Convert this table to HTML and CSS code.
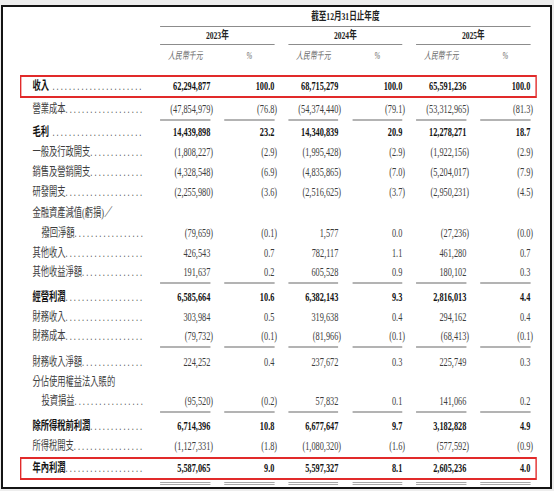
FILE: index.html
```html
<!DOCTYPE html>
<html lang="zh-Hant">
<head>
<meta charset="utf-8">
<title>綜合損益表</title>
<link rel="stylesheet" href="styles.css">
</head>
<body>
<div class="frame">
  <div class="sheet">
    <div class="row title-row">
      <div class="lab"></div>
      <div class="title">截至12月31日止年度</div>
    </div>
    <div class="row year-row">
      <div class="lab"></div>
      <div class="year">2023年</div>
      <div class="year">2024年</div>
      <div class="year">2025年</div>
    </div>
    <div class="row unit-row">
      <div class="lab"></div>
      <div class="unit">人民幣千元</div><div class="unit">%</div>
      <div class="unit">人民幣千元</div><div class="unit">%</div>
      <div class="unit">人民幣千元</div><div class="unit">%</div>
    </div>

    <div class="row boxed bold mt8">
      <div class="lab"><span class="t">收入</span><span class="dots sp">......................</span></div>
      <div class="v">62,294,877</div><div class="v">100.0</div>
      <div class="v">68,715,279</div><div class="v">100.0</div>
      <div class="v">65,591,236</div><div class="v">100.0</div>
    </div>
    <div class="row ulrow mt2">
      <div class="lab"><span class="t">營業成本</span><span class="dots">...................</span></div>
      <div class="v ul"><span class="n">(47,854,979)</span></div><div class="v ul"><span class="n">(76.8)</span></div>
      <div class="v ul"><span class="n">(54,374,440)</span></div><div class="v ul"><span class="n">(79.1)</span></div>
      <div class="v ul"><span class="n">(53,312,965)</span></div><div class="v ul"><span class="n">(81.3)</span></div>
    </div>
    <div class="row bold mt1">
      <div class="lab"><span class="t">毛利</span><span class="dots sp">......................</span></div>
      <div class="v">14,439,898</div><div class="v">23.2</div>
      <div class="v">14,340,839</div><div class="v">20.9</div>
      <div class="v">12,278,271</div><div class="v">18.7</div>
    </div>
    <div class="row">
      <div class="lab"><span class="t">一般及行政開支</span><span class="dots">.............</span></div>
      <div class="v"><span class="n">(1,808,227)</span></div><div class="v"><span class="n">(2.9)</span></div>
      <div class="v"><span class="n">(1,995,428)</span></div><div class="v"><span class="n">(2.9)</span></div>
      <div class="v"><span class="n">(1,922,156)</span></div><div class="v"><span class="n">(2.9)</span></div>
    </div>
    <div class="row">
      <div class="lab"><span class="t">銷售及營銷開支</span><span class="dots">.............</span></div>
      <div class="v"><span class="n">(4,328,548)</span></div><div class="v"><span class="n">(6.9)</span></div>
      <div class="v"><span class="n">(4,835,865)</span></div><div class="v"><span class="n">(7.0)</span></div>
      <div class="v"><span class="n">(5,204,017)</span></div><div class="v"><span class="n">(7.9)</span></div>
    </div>
    <div class="row">
      <div class="lab"><span class="t">研發開支</span><span class="dots">...................</span></div>
      <div class="v"><span class="n">(2,255,980)</span></div><div class="v"><span class="n">(3.6)</span></div>
      <div class="v"><span class="n">(2,516,625)</span></div><div class="v"><span class="n">(3.7)</span></div>
      <div class="v"><span class="n">(2,950,231)</span></div><div class="v"><span class="n">(4.5)</span></div>
    </div>
    <div class="row mt1">
      <div class="lab"><span class="t">金融資產減值(虧損)／</span></div>
    </div>
    <div class="row">
      <div class="lab indent"><span class="t">撥回淨額</span><span class="dots">.................</span></div>
      <div class="v"><span class="n">(79,659)</span></div><div class="v"><span class="n">(0.1)</span></div>
      <div class="v">1,577</div><div class="v">0.0</div>
      <div class="v"><span class="n">(27,236)</span></div><div class="v"><span class="n">(0.0)</span></div>
    </div>
    <div class="row">
      <div class="lab"><span class="t">其他收入</span><span class="dots">...................</span></div>
      <div class="v">426,543</div><div class="v">0.7</div>
      <div class="v">782,117</div><div class="v">1.1</div>
      <div class="v">461,280</div><div class="v">0.7</div>
    </div>
    <div class="row ulrow">
      <div class="lab"><span class="t">其他收益淨額</span><span class="dots">...............</span></div>
      <div class="v ul">191,637</div><div class="v ul">0.2</div>
      <div class="v ul">605,528</div><div class="v ul">0.9</div>
      <div class="v ul">180,102</div><div class="v ul">0.3</div>
    </div>
    <div class="row bold mt3">
      <div class="lab"><span class="t">經營利潤</span><span class="dots">...................</span></div>
      <div class="v">6,585,664</div><div class="v">10.6</div>
      <div class="v">6,382,143</div><div class="v">9.3</div>
      <div class="v">2,816,013</div><div class="v">4.4</div>
    </div>
    <div class="row">
      <div class="lab"><span class="t">財務收入</span><span class="dots">...................</span></div>
      <div class="v">303,984</div><div class="v">0.5</div>
      <div class="v">319,638</div><div class="v">0.4</div>
      <div class="v">294,162</div><div class="v">0.4</div>
    </div>
    <div class="row ulrow">
      <div class="lab"><span class="t">財務成本</span><span class="dots">...................</span></div>
      <div class="v ul"><span class="n">(79,732)</span></div><div class="v ul"><span class="n">(0.1)</span></div>
      <div class="v ul"><span class="n">(81,966)</span></div><div class="v ul"><span class="n">(0.1)</span></div>
      <div class="v ul"><span class="n">(68,413)</span></div><div class="v ul"><span class="n">(0.1)</span></div>
    </div>
    <div class="row mt4">
      <div class="lab"><span class="t">財務收入淨額</span><span class="dots">...............</span></div>
      <div class="v">224,252</div><div class="v">0.4</div>
      <div class="v">237,672</div><div class="v">0.3</div>
      <div class="v">225,749</div><div class="v">0.3</div>
    </div>
    <div class="row">
      <div class="lab"><span class="t">分佔使用權益法入賬的</span></div>
    </div>
    <div class="row ulrow">
      <div class="lab indent"><span class="t">投資損益</span><span class="dots">.................</span></div>
      <div class="v ul"><span class="n">(95,520)</span></div><div class="v ul"><span class="n">(0.2)</span></div>
      <div class="v ul">57,832</div><div class="v ul">0.1</div>
      <div class="v ul">141,066</div><div class="v ul">0.2</div>
    </div>
    <div class="row bold mt3">
      <div class="lab"><span class="t">除所得稅前利潤</span><span class="dots">.............</span></div>
      <div class="v">6,714,396</div><div class="v">10.8</div>
      <div class="v">6,677,647</div><div class="v">9.7</div>
      <div class="v">3,182,828</div><div class="v">4.9</div>
    </div>
    <div class="row">
      <div class="lab"><span class="t">所得稅開支</span><span class="dots">.................</span></div>
      <div class="v"><span class="n">(1,127,331)</span></div><div class="v"><span class="n">(1.8)</span></div>
      <div class="v"><span class="n">(1,080,320)</span></div><div class="v"><span class="n">(1.6)</span></div>
      <div class="v"><span class="n">(577,592)</span></div><div class="v"><span class="n">(0.9)</span></div>
    </div>
    <div class="row boxed bold mt1">
      <div class="lab"><span class="t">年內利潤</span><span class="dots">...................</span></div>
      <div class="v">5,587,065</div><div class="v">9.0</div>
      <div class="v">5,597,327</div><div class="v">8.1</div>
      <div class="v">2,605,236</div><div class="v">4.0</div>
    </div>
    <div class="row rule-row mt2">
      <div class="lab"></div>
      <div class="dbl"></div><div class="dbl"></div><div class="dbl"></div>
      <div class="dbl"></div><div class="dbl"></div><div class="dbl"></div>
    </div>
  </div>
</div>
</body>
</html>
```

FILE: styles.css
```css
html, body {
  margin: 0;
  padding: 0;
  background: #ededed;
}

body {
  width: 554px;
  height: 491px;
  overflow: hidden;
  font-family: "Liberation Serif", "Noto Sans CJK TC", serif;
  font-size: 12px;
  color: #3d3d3d;
}

.frame {
  box-sizing: border-box;
  margin: 5px 0 0 1px;
  width: 551px;
  height: 484px;
  border: 2px solid #141414;
  background: #ffffff;
  padding-left: 17px;
}

/* Table is laid out in a wider space and compressed horizontally,
   matching the narrow typeface of the source document. */
.sheet {
  width: 749.3px;
  transform: scaleX(0.69);
  transform-origin: 0 0;
}

.row {
  display: grid;
  grid-template-columns: 181.16px repeat(6, 72.46px);
  column-gap: 20.29px;
  border-left: 2.9px solid transparent;
  border-right: 2.9px solid transparent;
  padding-right: 5.8px;
  line-height: 20px;
  white-space: nowrap;
}

.mt1 { margin-top: 1px; }
.mt2 { margin-top: 2px; }
.mt3 { margin-top: 3px; }
.mt4 { margin-top: 4px; }
.mt8 { margin-top: 8px; }

/* header */
.title-row {
  line-height: 19px;
  font-size: 11px;
  font-weight: bold;
  color: #222;
}
.title {
  grid-column: 2 / 8;
  text-align: center;
  border-bottom: 1px solid #8c8c8c;
}
.year-row {
  line-height: 17px;
  font-size: 11px;
  font-weight: bold;
  color: #222;
}
.year {
  grid-column: span 2;
  text-align: center;
  border-bottom: 1px solid #8c8c8c;
}
.unit-row {
  line-height: 22px;
  font-size: 10px;
  color: #666;
}
.unit {
  text-align: center;
  font-style: italic;
}

/* body */
.lab {
  padding-left: 15.94px;
}
.lab.indent {
  padding-left: 29px;
}
.dots {
  letter-spacing: 3px;
  color: #555;
  font-weight: normal;
}
.dots.sp {
  margin-left: 5px;
}

.v {
  text-align: right;
}
.n {
  margin-right: -4px;
}

.ulrow {
  line-height: 19px;
}
.ul {
  border-bottom: 2px solid #b3b3b3;
}

.bold {
  font-weight: bold;
  color: #141414;
}

.boxed {
  border: 2px solid #e12a2a;
  border-left-width: 2.9px;
  border-right-width: 2.9px;
  line-height: 19px;
}

.rule-row {
  line-height: 0;
}
.dbl {
  height: 1px;
  border-top: 1px solid #a8a8a8;
  border-bottom: 1px solid #a8a8a8;
}
```
